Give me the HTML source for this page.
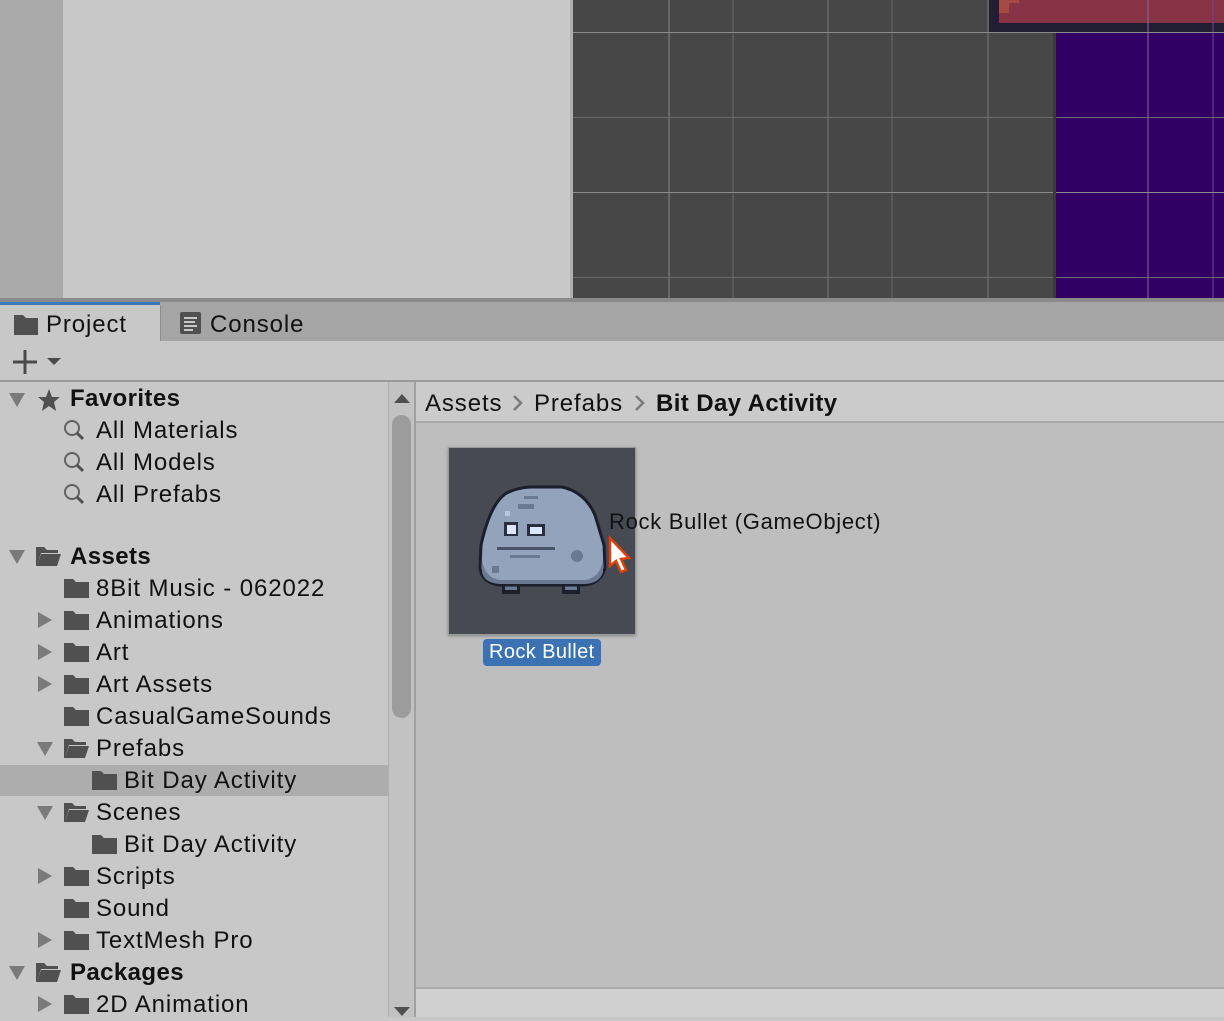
<!DOCTYPE html>
<html><head><meta charset="utf-8"><style>
*{margin:0;padding:0;box-sizing:border-box}
body{width:1224px;height:1017px;overflow:hidden;position:relative;font-family:"Liberation Sans",sans-serif;background:#c8c8c8;color:#111}
.a{position:absolute}
.t{position:absolute;font-size:24px;letter-spacing:0.9px;line-height:32px;padding-top:1px;white-space:nowrap;color:#111}
.b{font-weight:bold;letter-spacing:0.4px}
</style></head><body>
<div class="a" style="left:0;top:0;width:63px;height:298px;background:#aaaaaa"></div>
<div class="a" style="left:63px;top:0;width:507px;height:298px;background:#c8c8c8"></div>
<div class="a" style="left:570px;top:0;width:3px;height:298px;background:#b0b0b0"></div>
<svg class="a" style="left:573px;top:0" width="651" height="298">
<rect width="651" height="298" fill="#474747"/>
<rect x="416" y="0" width="235" height="32" fill="#211d33"/>
<rect x="426" y="0" width="225" height="23" fill="#853345"/>
<rect x="426" y="0" width="20" height="3" fill="#a84a44"/>
<rect x="426" y="0" width="10" height="13" fill="#a84a44"/>
<rect x="483" y="33" width="168" height="265" fill="#320064"/>
<g stroke="#8a8a8a" stroke-width="1">
<line x1="96" y1="0" x2="96" y2="298"/><line x1="160" y1="0" x2="160" y2="298" stroke="#6a6a6a"/>
<line x1="255" y1="0" x2="255" y2="298" stroke="#7a7a7a"/><line x1="319" y1="0" x2="319" y2="298" stroke="#6a6a6a"/>
<line x1="415" y1="0" x2="415" y2="298" stroke="#7a7a7a"/>
<line x1="575" y1="0" x2="575" y2="298" stroke="#8a6aa8"/><line x1="640" y1="0" x2="640" y2="298" stroke="#6a4a98"/>
<line x1="0" y1="32.5" x2="651" y2="32.5"/><line x1="0" y1="117.5" x2="651" y2="117.5" stroke="#6a6a6a"/>
<line x1="0" y1="192.5" x2="651" y2="192.5"/><line x1="0" y1="277.5" x2="651" y2="277.5" stroke="#6a6a6a"/>
</g>
<rect x="480" y="33" width="3" height="265" fill="#3a3a3a"/>
</svg>
<div class="a" style="left:0;top:298px;width:1224px;height:4px;background:#8a8a8a"></div>
<div class="a" style="left:0;top:302px;width:1224px;height:39px;background:#a5a5a5"></div>
<div class="a" style="left:0;top:302px;width:160px;height:39px;background:#c8c8c8;border-top:3px solid #3a79bb"></div>
<div class="a" style="left:160px;top:305px;width:1px;height:36px;background:#8c8c8c"></div>
<svg class="a" style="left:14px;top:313px" width="26" height="22"><path d="M0 2h9l3 3h12v17H0z" fill="#505050"/></svg>
<div class="t" style="left:46px;top:308px">Project</div>
<svg class="a" style="left:180px;top:312px" width="21" height="22"><rect width="21" height="22" rx="2" fill="#505050"/><g stroke="#c8c8c8" stroke-width="2"><line x1="4" y1="6" x2="17" y2="6"/><line x1="4" y1="10" x2="15" y2="10"/><line x1="4" y1="14" x2="17" y2="14"/><line x1="4" y1="18" x2="13" y2="18"/></g></svg>
<div class="t" style="left:210px;top:308px">Console</div>
<div class="a" style="left:0;top:341px;width:1224px;height:41px;background:#c8c8c8;border-bottom:2px solid #9a9a9a"></div>
<svg class="a" style="left:13px;top:348px" width="50" height="28"><path d="M12 2v24M0 14h24" stroke="#4a4a4a" stroke-width="3"/><path d="M34 10h14l-7 7z" fill="#4a4a4a"/></svg>
<div class="a" style="left:0;top:765px;width:388px;height:31px;background:#adadad"></div>
<div class="a" style="left:388px;top:382px;width:28px;height:635px;background:#c2c2c2;border-left:1px solid #b0b0b0;border-right:2px solid #a0a0a0"></div>
<div class="a" style="left:392px;top:415px;width:19px;height:303px;background:#9c9c9c;border-radius:10px"></div>
<svg class="a" style="left:393px;top:392px" width="18" height="12"><path d="M1 11h16L9 2z" fill="#505050"/></svg>
<svg class="a" style="left:393px;top:1006px" width="18" height="11"><path d="M1 1h16L9 10z" fill="#505050"/></svg>

<svg class="a" style="left:0;top:382px" width="388" height="635">
<defs>
<path id="dn" d="M0 0h16L8 14z" fill="#7a7a7a"/>
<path id="rt" d="M0 0v16l14-8z" fill="#7a7a7a"/>
<path id="fc" d="M0 3h9l3 3h13v16H0z" fill="#505050"/>
<path id="fo" d="M0 3h8l3 3h11v3H5L1 22H0z M5 10h20l-4 12H1z" fill="#505050"/>
<g id="mg"><circle cx="8" cy="8" r="7" fill="none" stroke="#606060" stroke-width="2"/><path d="M13 13l6 6" stroke="#505050" stroke-width="3"/></g>
</defs>
<use href="#dn" x="9" y="11"/>
<path d="M49 7l3 8h8l-6 5 2 9-7-5-7 5 2-9-6-5h8z" fill="#505050"/>
<use href="#mg" x="64" y="38"/><use href="#mg" x="64" y="70"/><use href="#mg" x="64" y="102"/>
<use href="#dn" x="9" y="168"/><use href="#fo" x="36" y="162"/>
<use href="#fc" x="64" y="194"/>
<use href="#rt" x="38" y="230"/><use href="#fc" x="64" y="226"/>
<use href="#rt" x="38" y="262"/><use href="#fc" x="64" y="258"/>
<use href="#rt" x="38" y="294"/><use href="#fc" x="64" y="290"/>
<use href="#fc" x="64" y="322"/>
<use href="#dn" x="37" y="360"/><use href="#fo" x="64" y="354"/>
<use href="#fc" x="92" y="386"/>
<use href="#dn" x="37" y="424"/><use href="#fo" x="64" y="418"/>
<use href="#fc" x="92" y="450"/>
<use href="#rt" x="38" y="486"/><use href="#fc" x="64" y="482"/>
<use href="#fc" x="64" y="514"/>
<use href="#rt" x="38" y="550"/><use href="#fc" x="64" y="546"/>
<use href="#dn" x="9" y="584"/><use href="#fo" x="36" y="578"/>
<use href="#rt" x="38" y="614"/><use href="#fc" x="64" y="610"/>
</svg>
<div class="t b" style="left:70px;top:382px">Favorites</div>
<div class="t" style="left:96px;top:414px">All Materials</div>
<div class="t" style="left:96px;top:446px">All Models</div>
<div class="t" style="left:96px;top:478px">All Prefabs</div>
<div class="t b" style="left:70px;top:540px">Assets</div>
<div class="t" style="left:96px;top:572px">8Bit Music - 062022</div>
<div class="t" style="left:96px;top:604px">Animations</div>
<div class="t" style="left:96px;top:636px">Art</div>
<div class="t" style="left:96px;top:668px">Art Assets</div>
<div class="t" style="left:96px;top:700px">CasualGameSounds</div>
<div class="t" style="left:96px;top:732px">Prefabs</div>
<div class="t" style="left:124px;top:764px">Bit Day Activity</div>
<div class="t" style="left:96px;top:796px">Scenes</div>
<div class="t" style="left:124px;top:828px">Bit Day Activity</div>
<div class="t" style="left:96px;top:860px">Scripts</div>
<div class="t" style="left:96px;top:892px">Sound</div>
<div class="t" style="left:96px;top:924px">TextMesh Pro</div>
<div class="t b" style="left:70px;top:956px">Packages</div>
<div class="t" style="left:96px;top:988px">2D Animation</div>
<div class="a" style="left:416px;top:382px;width:808px;height:41px;background:#cbcbcb;border-bottom:2px solid #a8a8a8"></div>
<div class="t" style="left:425px;top:387px">Assets</div>
<svg class="a" style="left:512px;top:394px" width="12" height="18"><path d="M2 2l7 7-7 7" stroke="#7a7a7a" stroke-width="2.5" fill="none"/></svg>
<div class="t" style="left:534px;top:387px">Prefabs</div>
<svg class="a" style="left:634px;top:394px" width="12" height="18"><path d="M2 2l7 7-7 7" stroke="#7a7a7a" stroke-width="2.5" fill="none"/></svg>
<div class="t b" style="left:656px;top:387px">Bit Day Activity</div>
<div class="a" style="left:416px;top:423px;width:808px;height:564px;background:#bebebe"></div>
<div class="a" style="left:416px;top:987px;width:808px;height:30px;background:#d0d0d0;border-top:2px solid #aaaaaa"></div>
<div class="a" style="left:448px;top:447px;width:188px;height:188px;background:#474a52;border:1px solid #9a9a9a;box-shadow:0 1px 3px rgba(0,0,0,.3)"></div>
<svg class="a" style="left:0;top:0" width="1224" height="1017" viewBox="0 0 1224 1017">
<rect x="502" y="580" width="18" height="14" fill="#1b1e2b"/><rect x="505" y="582" width="12" height="8" fill="#6b7a92"/>
<rect x="562" y="580" width="18" height="14" fill="#1b1e2b"/><rect x="565" y="582" width="12" height="8" fill="#6b7a92"/>
<path d="M530 487L562 487Q585 492 595 515L604 545L605 568Q601 583 585 585L500 585Q482 583 480 568L481 545Q490 505 505 494Q515 488 530 487Z" fill="#92a3bb" stroke="#1b1e2b" stroke-width="3"/>
<path d="M482 560Q485 578 500 580L585 580Q600 578 603 560L603 572Q600 583 585 584L500 584Q484 583 482 572Z" fill="#6b7a92"/>
<rect x="518" y="504" width="16" height="5" fill="#6b7a92"/><rect x="524" y="496" width="14" height="3" fill="#6b7a92"/>
<rect x="504" y="522" width="14" height="14" fill="#2a2f40"/><rect x="507" y="525" width="9" height="9" fill="#dde6ff"/>
<rect x="527" y="524" width="18" height="12" fill="#2a2f40"/><rect x="530" y="527" width="12" height="7" fill="#dde6ff"/>
<rect x="497" y="547" width="58" height="3" fill="#4a5468"/><rect x="510" y="555" width="30" height="3" fill="#6b7a92"/>
<circle cx="577" cy="556" r="6" fill="#6b7a92"/><rect x="492" y="566" width="7" height="7" fill="#6b7a92"/>
<rect x="505" y="511" width="5" height="5" fill="#b8c6dc"/>
<path d="M610 538L610 566L616 561L621 572L626 570L621 559L629 558Z" fill="#fff" stroke="#e0400a" stroke-width="2.5"/>
</svg>
<div class="t" style="left:609px;top:505px;font-size:22px;letter-spacing:0.7px">Rock Bullet (GameObject)</div>
<div class="a" style="left:483px;top:639px;width:118px;height:27px;background:#3a72b3;border-radius:4px"></div>
<div class="t" style="left:489px;top:636px;font-size:20px;letter-spacing:0.4px;color:#fff;line-height:31px">Rock Bullet</div>
</body></html>
